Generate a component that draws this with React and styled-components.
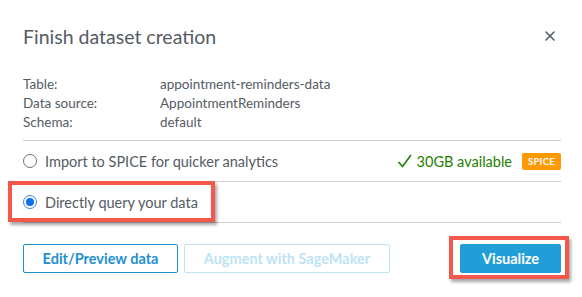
import styled, { createGlobalStyle } from 'styled-components';

const GlobalStyle = createGlobalStyle`
  html, body {
    margin: 0;
    padding: 0;
    background: #fff;
  }
  body {
    font-family: Lato, 'Liberation Sans', sans-serif;
    color: #545b64;
  }
`;

const Modal = styled.div`
  width: 582px;
  height: 297px;
  box-sizing: border-box;
  padding: 0 21px 0 23px;
`;

const Header = styled.div`
  height: 74px;
  display: flex;
  align-items: center;
  justify-content: space-between;
  padding-bottom: 2px;
  box-sizing: border-box;
`;

const Title = styled.h2`
  margin: 0;
  font-size: 19.5px;
  font-weight: 400;
  color: #545b64;
`;

const Close = styled.button`
  border: 0;
  background: none;
  padding: 0;
  margin-right: 5px;
  width: 12px;
  height: 12px;
  display: flex;
  cursor: pointer;
`;

const Info = styled.dl`
  margin: 0 0 9px;
  display: grid;
  grid-template-columns: 137px 1fr;
  grid-auto-rows: 19px;
  align-items: center;
  font-size: 13.5px;
  color: #545b64;

  dt, dd {
    margin: 0;
  }
`;

const Options = styled.div`
  display: flex;
  flex-direction: column;
  border-bottom: 1px solid #cfcfcf;
`;

const OptionRow = styled.label`
  position: relative;
  height: 40px;
  display: flex;
  align-items: center;
  border-top: 1px solid #cfcfcf;
  font-size: 14.5px;
  color: #545b64;
`;

const Radio = styled.span`
  width: 14px;
  height: 14px;
  margin-left: 0;
  margin-right: 8px;
  border-radius: 50%;
  box-sizing: border-box;
  border: 1px solid ${(p) => (p.checked ? '#3b82e8' : '#707070')};
  background: #fff;
  display: flex;
  align-items: center;
  justify-content: center;

  &::after {
    content: '';
    width: 8px;
    height: 8px;
    border-radius: 50%;
    background: ${(p) => (p.checked ? '#0b6ff2' : 'transparent')};
  }
`;

const Available = styled.span`
  margin-left: auto;
  display: flex;
  align-items: center;
  gap: 4px;
  color: #1d8102;
  font-size: 14.5px;
`;

const Badge = styled.span`
  margin-left: 10px;
  height: 17px;
  width: 39px;
  border-radius: 2px;
  background: #ff9900;
  color: #fff;
  font-size: 9.5px;
  font-weight: 700;
  letter-spacing: 0.3px;
  display: flex;
  align-items: center;
  justify-content: center;
`;

const Highlight = styled.span`
  position: absolute;
  left: ${(p) => p.left}px;
  right: ${(p) => p.right}px;
  top: ${(p) => p.top}px;
  bottom: ${(p) => p.bottom}px;
  border: 4px solid #f4584a;
  box-shadow: 2px 3px 3px rgba(0, 0, 0, 0.35);
  pointer-events: none;
`;

const Footer = styled.div`
  margin-top: 21px;
  display: flex;
  align-items: center;
  gap: 6px;
`;

const Button = styled.button`
  position: relative;
  height: 29px;
  padding: 0;
  width: ${(p) => p.width}px;
  border-radius: 2px;
  font-family: inherit;
  font-size: 14.5px;
  font-weight: 700;
  border: 1px solid ${(p) => (p.primary ? '#219ed8' : p.disabled ? '#bde3f5' : '#1f8fd1')};
  background: ${(p) => (p.primary ? '#219ed8' : '#fff')};
  color: ${(p) => (p.primary ? '#fff' : p.disabled ? '#bde3f5' : '#1f8fd1')};
  margin-left: ${(p) => (p.primary ? 'auto' : '0')};
  cursor: ${(p) => (p.disabled ? 'default' : 'pointer')};
`;

export default function App() {
  return (
    <>
      <GlobalStyle />
      <Modal>
        <Header>
          <Title>Finish dataset creation</Title>
          <Close aria-label="Close">
            <svg width="12" height="12" viewBox="0 0 12 12">
              <path d="M2 2 L10 10 M10 2 L2 10" stroke="#545b64" strokeWidth="1.6" strokeLinecap="round" />
            </svg>
          </Close>
        </Header>

        <Info>
          <dt>Table:</dt>
          <dd>appointment-reminders-data</dd>
          <dt>Data source:</dt>
          <dd>AppointmentReminders</dd>
          <dt>Schema:</dt>
          <dd>default</dd>
        </Info>

        <Options>
          <OptionRow>
            <Radio />
            Import to SPICE for quicker analytics
            <Available>
              <svg width="16" height="16" viewBox="0 0 16 16">
                <path d="M1.5 9 L5.5 13.5 L14 2" fill="none" stroke="#1d8102" strokeWidth="1.6" />
              </svg>
              30GB available
            </Available>
            <Badge>SPICE</Badge>
          </OptionRow>
          <OptionRow>
            <Radio checked />
            Directly query your data
            <Highlight left={-15} right={346} top={-1} bottom={0} />
          </OptionRow>
        </Options>

        <Footer>
          <Button width={155}>Edit/Preview data</Button>
          <Button width={206} disabled>Augment with SageMaker</Button>
          <Button width={101} primary>
            Visualize
            <Highlight left={-12} right={-9} top={-9} bottom={-7} />
          </Button>
        </Footer>
      </Modal>
    </>
  );
}
